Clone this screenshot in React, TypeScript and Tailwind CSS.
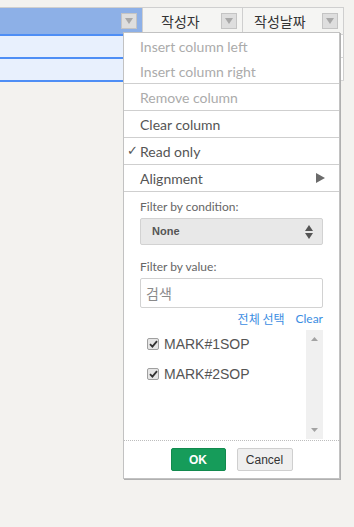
import React from "react";

function HeadBtn() {
  return (
    <div className="w-[16px] h-[16px] bg-[#dedede] border border-[#c4c4c4] flex items-center justify-center">
      <svg width="8" height="6" viewBox="0 0 8 6">
        <path d="M0 0 L8 0 L4 6 Z" fill="#a8a8a8" />
      </svg>
    </div>
  );
}

function Check() {
  return (
    <div className="w-[12px] h-[12px] border border-[#a0a0a0] bg-[#e6e6e6] rounded-[2px] flex items-center justify-center">
      <svg width="9" height="8" viewBox="0 0 9 8">
        <path d="M1 4.2 L3.4 6.6 L8 1.2" stroke="#333" strokeWidth="1.8" fill="none" />
      </svg>
    </div>
  );
}

export default function App() {
  const menuFont = { fontFamily: "Lato, 'Open Sans', sans-serif" } as React.CSSProperties;
  return (
    <div className="relative w-[354px] min-h-[527px] bg-[#f3f2ef] overflow-hidden" style={{ fontFamily: "'Noto Sans', 'Noto Sans CJK KR', sans-serif" }}>
      <div className="pt-[7px]">
        <div className="w-[344px] border-t border-[#cfcfcf]">
          {/* header */}
          <div className="flex h-[26px]">
            <div className="w-[143px] bg-[#8db0e7] flex items-center justify-end pr-[5px] border-r border-[#cfcfcf]">
              <HeadBtn />
            </div>
            <div className="w-[100px] bg-[#f5f5f3] flex items-center border-r border-[#cfcfcf] pl-[18px] pr-[5px]">
              <span className="flex-1 text-[14px] text-[#333]" style={{ fontFamily: "'Noto Sans CJK KR', sans-serif" }}>작성자</span>
              <HeadBtn />
            </div>
            <div className="w-[101px] bg-[#f5f5f3] flex items-center border-r border-[#cfcfcf] pl-[11px] pr-[5px]">
              <span className="flex-1 text-[14px] text-[#333]" style={{ fontFamily: "'Noto Sans CJK KR', sans-serif" }}>작성날짜</span>
              <HeadBtn />
            </div>
          </div>
          {/* rows */}
          {[0, 1].map((i) => (
            <div key={i} className="flex h-[23px]">
              <div className="w-[143px] bg-[#e8f0fd] border-t-2 border-[#4e8ef5] border-r border-r-[#cfcfcf]" />
              <div className="w-[100px] bg-white border-t border-[#d6d6d6] border-r border-r-[#cfcfcf]" />
              <div className="w-[101px] bg-white border-t border-[#d6d6d6] border-r border-r-[#cfcfcf]" />
            </div>
          ))}
          <div className="flex">
            <div className="w-[143px] border-t-2 border-[#4e8ef5]" />
            <div className="w-[201px] border-t border-[#d6d6d6]" />
          </div>
        </div>
      </div>

      {/* dropdown menu */}
      <div
        className="absolute left-[123px] top-[32px] w-[217px] bg-white border border-[#c2c2c2] shadow-[1px_1px_0_#b0b0b0] flex flex-col"
        style={menuFont}
      >
        <div className="h-[26px] flex items-center pl-[16px] text-[14px] text-[#ababab]">Insert column left</div>
        <div className="h-[25px] flex items-center pl-[16px] text-[14px] text-[#ababab] border-b border-[#cfcfcf]">Insert column right</div>
        <div className="h-[27px] flex items-center pl-[16px] text-[14px] text-[#ababab] border-b border-[#cfcfcf]">Remove column</div>
        <div className="h-[27px] flex items-center pl-[16px] text-[14px] text-[#555] border-b border-[#cfcfcf]">Clear column</div>
        <div className="h-[27px] flex items-center pl-[3px] text-[14px] text-[#555] border-b border-[#cfcfcf]">
          <span className="w-[13px] text-[13px]">✓</span>
          <span>Read only</span>
        </div>
        <div className="h-[27px] flex items-center pl-[16px] pr-[14px] text-[14px] text-[#555] border-b border-[#cfcfcf]">
          <span className="flex-1">Alignment</span>
          <svg width="9" height="10" viewBox="0 0 9 10">
            <path d="M0 0 L9 5 L0 10 Z" fill="#6b6b6b" />
          </svg>
        </div>

        {/* filter section */}
        <div className="px-[16px] flex flex-col">
          <div className="mt-[7px] h-[16px] leading-[16px] text-[12px] text-[#666]">Filter by condition:</div>
          <div className="mt-[3px] h-[27px] bg-[#e8e8e8] border border-[#d2d2d2] rounded-[2px] flex items-center pl-[11px] pr-[9px]">
            <span className="flex-1 text-[11px] font-bold text-[#555]" style={{ fontFamily: "'Liberation Sans', Arial, sans-serif" }}>None</span>
            <svg width="8" height="14" viewBox="0 0 8 14">
              <path d="M4 0 L8 6 L0 6 Z" fill="#555" />
              <path d="M0 8 L8 8 L4 14 Z" fill="#555" />
            </svg>
          </div>
          <div className="mt-[14px] h-[16px] leading-[16px] text-[12px] text-[#666]">Filter by value:</div>
          <div className="mt-[3px] h-[30px] border border-[#d2d2d2] rounded-[2px] flex items-center pl-[5px] text-[14px] text-[#8a8a8a]" style={{ fontFamily: "'Noto Sans CJK KR', sans-serif" }}>
            검색
          </div>
          <div className="h-[22px] flex items-center justify-end gap-[11px] text-[12px] text-[#3b8de2]">
            <span style={{ fontFamily: "'Noto Sans CJK KR', sans-serif" }}>전체 선택</span>
            <span>Clear</span>
          </div>
          <div className="h-[109px] flex">
            <div className="flex-1 flex flex-col pt-[8px] pl-[7px]" style={{ fontFamily: "'Liberation Sans', Arial, sans-serif" }}>
              <div className="h-[30px] flex items-start gap-[5px]">
                <Check />
                <span className="text-[14px] leading-[13px] text-[#555]">MARK#1SOP</span>
              </div>
              <div className="h-[30px] flex items-start gap-[5px]">
                <Check />
                <span className="text-[14px] leading-[13px] text-[#555]">MARK#2SOP</span>
              </div>
            </div>
            <div className="w-[17px] bg-[#f0f0f0] flex flex-col items-center justify-between py-[7px]">
              <svg width="7" height="4" viewBox="0 0 7 4"><path d="M3.5 0 L7 4 L0 4 Z" fill="#a3a3a3" /></svg>
              <svg width="7" height="4" viewBox="0 0 7 4"><path d="M0 0 L7 0 L3.5 4 Z" fill="#a3a3a3" /></svg>
            </div>
          </div>
        </div>
        <div className="border-t border-dotted border-[#bdbdbd] mt-[1px] pt-[7px] pb-[7px] flex justify-center gap-[11px]" style={{ fontFamily: "'Liberation Sans', Arial, sans-serif" }}>
          <div className="w-[55px] h-[23px] bg-[#169c5a] border border-[#128a4e] rounded-[2px] flex items-center justify-center text-white font-bold text-[12px]">OK</div>
          <div className="w-[56px] h-[23px] bg-[#efefef] border border-[#cfcfcf] rounded-[2px] flex items-center justify-center text-[#333] text-[12px]">Cancel</div>
        </div>
      </div>
    </div>
  );
}
